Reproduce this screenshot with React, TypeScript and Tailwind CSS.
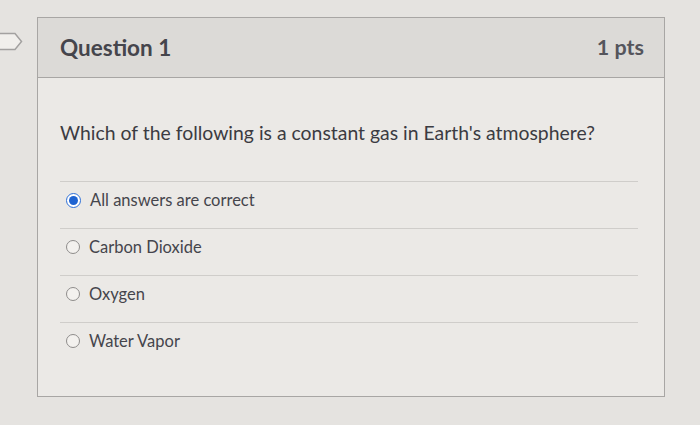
const options = [
  { label: 'All answers are correct', selected: true },
  { label: 'Carbon Dioxide', selected: false },
  { label: 'Oxygen', selected: false },
  { label: 'Water Vapor', selected: false },
];

const Radio = ({ selected }: { selected: boolean }) => {
  if (selected) {
    return (
      <span className="flex h-[15px] w-[15px] items-center justify-center rounded-full border-[1.5px] border-[#2d6fd6] bg-white">
        <span className="h-[9px] w-[9px] rounded-full bg-[#1e63d1]" />
      </span>
    );
  }
  return (
    <span className="h-[14px] w-[14px] rounded-full border-[1.5px] border-[#8e8c8b] bg-[#f3f1ee]" />
  );
};

const App = () => {
  return (
    <div
      className="flex h-[425px] w-[700px] bg-[#e5e3e0] pt-[17px] text-[#3b3b42]"
      style={{ fontFamily: 'Lato, "Noto Sans", sans-serif' }}
    >
      <div className="w-[37px] pt-[15px]">
        <svg width="30" height="20" viewBox="0 0 30 20">
          <path
            d="M-2 1.5 H15 L21.5 9.5 L15 17.5 H-2"
            fill="#f1efec"
            stroke="#a3a1a0"
            strokeWidth="1.5"
          />
        </svg>
      </div>
      <div className="flex h-[380px] w-[628px] flex-col border border-[#a8a6a4] bg-[#ebe9e6]">
        <div className="flex h-[60px] shrink-0 items-center justify-between border-b border-[#a8a6a4] bg-[#dcdad7] pl-[22px] pr-[20px]">
          <h1 className="text-[22.5px] font-bold text-[#45454c]">Question 1</h1>
          <span className="text-[21.5px] font-bold text-[#55555c]">1 pts</span>
        </div>
        <div className="px-[22px] pt-[43px]">
          <p className="text-[19.4px] leading-[24px]">
            Which of the following is a constant gas in Earth's atmosphere?
          </p>
          <ul className="mt-[36px] mr-[4px]">
            {options.map((option) => (
              <li
                key={option.label}
                className="flex h-[47px] items-start gap-[9px] border-t border-[#cfcdca] pl-[6px] pt-[8px]"
              >
                <span className="flex h-[20px] items-center">
                  <Radio selected={option.selected} />
                </span>
                <span className="text-[16.5px] leading-[20px] text-[#45454c]">
                  {option.label}
                </span>
              </li>
            ))}
          </ul>
        </div>
      </div>
    </div>
  );
};

export default App;
